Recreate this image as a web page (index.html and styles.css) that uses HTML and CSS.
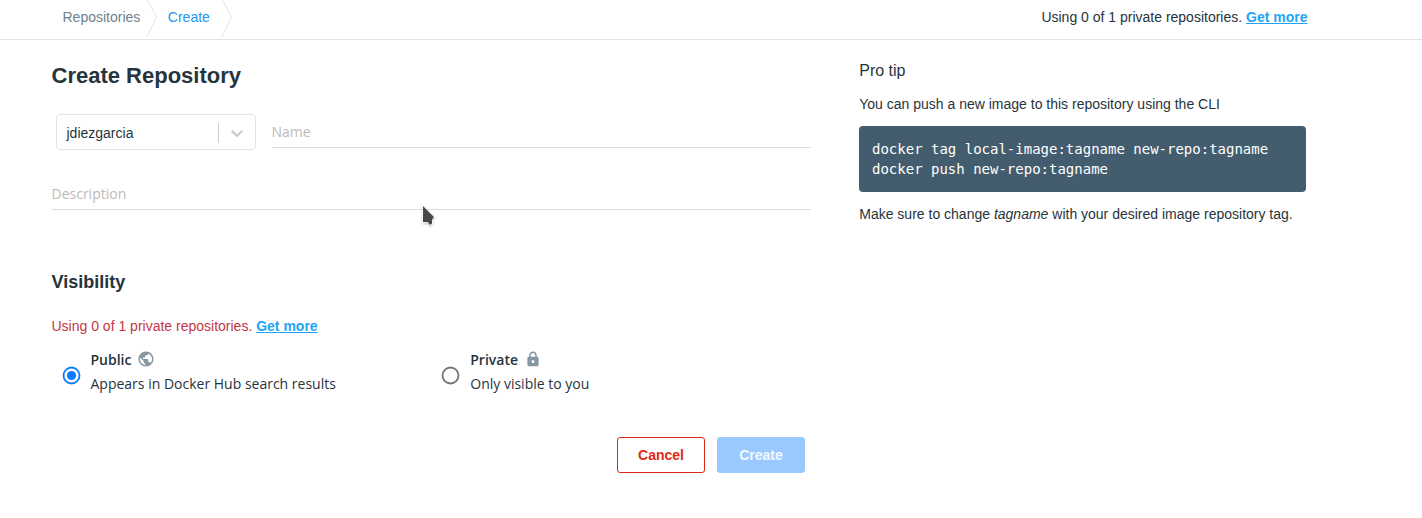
FILE: index.html
```html
<!DOCTYPE html>
<html lang="en">
<head>
<meta charset="utf-8">
<title>Create Repository</title>
<link rel="stylesheet" href="styles.css">
</head>
<body>
<header class="topbar">
  <nav class="crumbs">
    <a class="crumb">Repositories</a>
    <svg class="crumb-sep" width="12" height="39" viewBox="0 0 12 39"><path d="M1 -1L10.500 17L1 37"/></svg>
    <a class="crumb crumb-active">Create</a>
    <svg class="crumb-sep crumb-sep-last" width="12" height="39" viewBox="0 0 12 39"><path d="M1 -1L10.500 17L1 37"/></svg>
  </nav>
  <div class="usage">Using 0 of 1 private repositories. <a class="more">Get more</a></div>
</header>
<div class="page">
  <main class="form">
    <h1 class="title">Create Repository</h1>
    <div class="name-row">
      <div class="select">
        <span class="select-value">jdiezgarcia</span>
        <span class="select-arrow"><svg width="20" height="20" viewBox="0 0 20 20"><path d="M4.516 7.548c0.436-0.446 1.043-0.481 1.576 0l3.908 3.747 3.908-3.747c0.533-0.481 1.141-0.446 1.574 0 0.436 0.445 0.408 1.197 0 1.615-0.406 0.418-4.695 4.502-4.695 4.502-0.217 0.223-0.502 0.335-0.787 0.335s-0.570-0.112-0.789-0.335c0 0-4.287-4.084-4.695-4.502s-0.436-1.170 0-1.615z"/></svg></span>
      </div>
      <div class="field">Name</div>
    </div>
    <div class="field description">Description</div>
    <h2 class="subtitle">Visibility</h2>
    <p class="quota">Using 0 of 1 private repositories. <a class="more">Get more</a></p>
    <div class="options">
      <div class="option">
        <svg class="radio radio-on" width="20" height="20" viewBox="0 0 20 20"><circle cx="10.500" cy="9.500" r="8"/><circle class="dot" cx="10.500" cy="9.500" r="4.600"/></svg>
        <div>
          <div class="option-name">Public
            <svg class="icon" width="18" height="18" viewBox="0 0 24 24"><path d="M12 2C6.480 2 2 6.480 2 12s4.480 10 10 10 10-4.480 10-10S17.520 2 12 2zm-1 17.930c-3.950-.49-7-3.850-7-7.930 0-.62.080-1.210.21-1.790L9 15v1c0 1.100.9 2 2 2v1.930zm6.900-2.540c-.26-.81-1-1.390-1.900-1.390h-1v-3c0-.55-.45-1-1-1H8v-2h2c.55 0 1-.45 1-1V7h2c1.100 0 2-.9 2-2v-.41c2.930 1.190 5 4.060 5 7.410 0 2.080-.8 3.970-2.100 5.390z"/></svg>
          </div>
          <div class="option-text">Appears in Docker Hub search results</div>
        </div>
      </div>
      <div class="option">
        <svg class="radio" width="20" height="20" viewBox="0 0 20 20"><circle cx="9.500" cy="9.500" r="8"/></svg>
        <div>
          <div class="option-name">Private
            <svg class="icon" width="18" height="18" viewBox="0 0 24 24"><path d="M17.500 9H17V7c0-2.900-2.200-5-5-5S7 4.100 7 7v2h-.5C5.400 9 4.500 9.900 4.500 11v8.500c0 1.100.9 2 2 2h11c1.100 0 2-.9 2-2V11c0-1.100-.9-2-2-2zM12 17.200a2 2 0 1 1 0-4 2 2 0 0 1 0 4zM15 9H9V7c0-1.800 1.300-3.100 3-3.100s3 1.300 3 3.100z"/></svg>
          </div>
          <div class="option-text">Only visible to you</div>
        </div>
      </div>
    </div>
    <div class="actions">
      <button class="btn btn-cancel">Cancel</button>
      <button class="btn btn-create">Create</button>
    </div>
  </main>
  <aside class="tip">
    <h3 class="tip-title">Pro tip</h3>
    <p class="tip-text">You can push a new image to this repository using the CLI</p>
    <pre class="code">docker tag local-image:tagname new-repo:tagname
docker push new-repo:tagname</pre>
    <p class="tip-text">Make sure to change <em>tagname</em> with your desired image repository tag.</p>
  </aside>
</div>
<svg class="cursor" width="20" height="28" viewBox="0 0 20 28"><path d="M3 3V19H7.500L10 22L12 20.500V17L14 14Z"/></svg>
</body>
</html>
```
FILE: styles.css
```css
* { box-sizing: border-box; }
body {
  margin: 0;
  background: #fff;
  color: #27343b;
  font: 14px/20px "Liberation Sans", Arial, sans-serif;
}
h1, h2, h3, p, pre { margin: 0; }

.topbar {
  display: flex;
  justify-content: space-between;
  height: 40px;
  padding: 0 114.500px 0 62.500px;
  border-bottom: 1px solid #e0e2e3;
}
.crumbs { display: flex; }
.crumb, .usage { padding-top: 7px; }
.crumb { color: #6f818c; }
.crumb-active { color: #2496ed; }
.crumb-sep { margin: 0 9.500px 0 6px; fill: none; stroke: #e3e5e6; }
.crumb-sep-last { margin-left: 11px; }
.more { color: #1ea5f5; font-weight: 700; text-decoration: underline; }

.page { display: flex; padding: 0 116px 0 51.500px; }
.form { width: 759.500px; margin-right: 48px; }
.title { padding-top: 22px; font-size: 22px; line-height: 28px; }

.name-row { display: flex; gap: 15.500px; padding: 24px 0 0 4.500px; }
.select {
  display: flex;
  align-items: center;
  justify-content: space-between;
  width: 200px;
  height: 36px;
  padding-left: 9.500px;
  border: 1px solid #dfe2e4;
  border-radius: 4px;
}
.select-value { padding-top: 2px; }
.select-arrow {
  display: flex;
  align-items: center;
  height: 20px;
  margin-top: 2px;
  padding: 0 8px;
  border-left: 1px solid #ccc;
}
.select-arrow svg { fill: #ccc; }
.field {
  flex: 1;
  height: 34px;
  padding-top: 8px;
  border-bottom: 1px solid #dcdcdc;
  color: #bbb;
  font-family: "Open Sans", sans-serif;
}
.description { margin-top: 26px; }

.subtitle { margin-top: 60px; font-size: 18px; line-height: 24px; }
.quota { margin-top: 22px; color: #c43745; }

.options { display: flex; margin-top: 12px; padding-left: 9.500px; font-family: "Open Sans", sans-serif; }
.option { display: flex; align-items: center; gap: 9.500px; flex: 0 0 379.750px; }
.radio { margin-top: 8px; fill: none; stroke: #757575; stroke-width: 1.800; }
.radio-on { stroke: #0a7cff; }
.dot { fill: #0a7cff; stroke: none; }
.option-name { display: flex; align-items: center; gap: 6px; height: 24px; font-weight: 600; }
.option-text { line-height: 24px; }
.icon { margin-bottom: 2px; fill: #8797a2; }

.actions { display: flex; justify-content: flex-end; gap: 12px; margin-top: 41px; padding-right: 6px; }
.btn {
  width: 88px;
  height: 36px;
  padding: 0;
  border: 1px solid #99c9ff;
  border-radius: 3px;
  font: 700 14px "Liberation Sans", Arial, sans-serif;
}
.btn-cancel { border-color: #df2a13; background: #fff; color: #df2a13; }
.btn-create { background: #99c9ff; color: #f3f9ff; }

.tip { width: 447px; padding-top: 21px; }
.tip-title { font-size: 16px; font-weight: 400; line-height: 20px; }
.tip-text { margin-top: 13px; white-space: nowrap; }
.tip-title, .tip-text { padding-left: .25px; }
.code {
  height: 66px;
  margin: 12px 0;
  padding: 13px;
  border-radius: 4px;
  background: #445d6e;
  color: #fff;
  font: 14px/20px "DejaVu Sans Mono", monospace;
}
.code + .tip-text { margin-top: 0; }

/* Mouse pointer floating over the form */
.cursor {
  position: absolute;
  left: 420px;
  top: 203px;
  fill: #484848;
  filter: drop-shadow(0 1px 1px rgba(0, 0, 0, .25));
}
.cursor path { stroke: #fff; stroke-width: 1.500; paint-order: stroke; }
```
